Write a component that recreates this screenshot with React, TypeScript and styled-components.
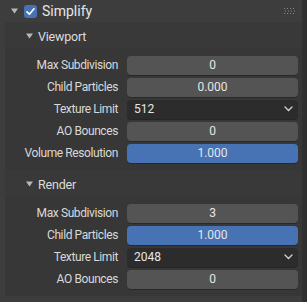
import styled, { createGlobalStyle } from 'styled-components';

const GlobalStyle = createGlobalStyle`
  html, body {
    margin: 0;
    padding: 0;
    background: #2b2b2b;
  }
  body {
    font-family: Roboto, 'Noto Sans', sans-serif;
  }
`;

// --- Panel layout ---

const Page = styled.div`
  width: 307px;
  height: 302px;
  overflow: hidden;
  background: #303030;
  display: flex;
  flex-direction: column;
`;

const Panel = styled.div`
  width: 302px;
  background: #3d3d3d;
  display: flex;
  flex-direction: column;
`;

const PanelHeader = styled.div`
  height: 22px;
  display: flex;
  align-items: center;
  padding-left: 11px;
  padding-right: 6px;
  color: #e6e6e6;
  font-size: 14px;
`;

const PanelBody = styled.div`
  padding-left: 5px;
  display: flex;
  flex-direction: column;
  background: #3d3d3d;
`;

const SubPanel = styled.div`
  background: #373737;
  display: flex;
  flex-direction: column;
`;

const SubHeader = styled.div`
  height: 26px;
  padding-top: 2px;
  box-sizing: border-box;
  display: flex;
  align-items: center;
  padding-left: 21px;
  color: #dcdcdc;
  font-size: 12.5px;
  letter-spacing: -0.2px;
  background: #393939;
`;

const SubBody = styled.div`
  padding: 7px 4px 7px 0;
  display: flex;
  flex-direction: column;
  gap: 2px;
`;

const Row = styled.div`
  height: 20px;
  display: flex;
  align-items: center;
`;

const Label = styled.div`
  width: 113px;
  padding-right: 9px;
  text-align: right;
  color: #d9d9d9;
  font-size: 12px;
  letter-spacing: -0.4px;
  white-space: nowrap;
`;

const Field = styled.div<{ active?: boolean }>`
  flex: 1;
  height: 19px;
  border-radius: 4px;
  background: ${({ active }) => (active ? '#4772b3' : '#545454')};
  color: #e6e6e6;
  font-size: 12px;
  display: flex;
  align-items: center;
  justify-content: center;
  box-shadow: 0 1px 0 rgba(0, 0, 0, 0.25);
`;

const Dropdown = styled.div`
  flex: 1;
  height: 19px;
  border-radius: 4px;
  background: #2c2c2c;
  color: #e6e6e6;
  font-size: 12px;
  display: flex;
  align-items: center;
  justify-content: space-between;
  padding: 0 5px 0 7px;
  box-shadow: 0 1px 0 rgba(0, 0, 0, 0.3);
`;

const Title = styled.span`
  margin-left: 5px;
`;

const Spacer = styled.div`
  flex: 1;
`;

const CheckBox = styled.div`
  width: 13px;
  height: 13px;
  border-radius: 3px;
  background: #4772b3;
  margin-left: 6px;
  display: flex;
  align-items: center;
  justify-content: center;
`;

const Footer = styled.div`
  flex: 1;
  background: #3d3d3d;
  width: 302px;
`;

// --- Icons ---

const Triangle = () => (
  <svg width="7" height="6" viewBox="0 0 7 6">
    <path d="M0 0.5 L7 0.5 L3.5 5.5 Z" fill="#b8b8b8" />
  </svg>
);

const Check = () => (
  <svg width="11" height="11" viewBox="0 0 11 11">
    <path d="M2 5.8 L4.4 8.2 L9 2.8" stroke="#ffffff" strokeWidth="1.7" fill="none" strokeLinecap="round" strokeLinejoin="round" />
  </svg>
);

const Chevron = () => (
  <svg width="9" height="6" viewBox="0 0 9 6">
    <path d="M1 1 L4.5 4.5 L8 1" stroke="#d0d0d0" strokeWidth="1.3" fill="none" strokeLinecap="round" />
  </svg>
);

const Grip = () => (
  <svg width="12" height="7" viewBox="0 0 12 7">
    {[0, 1, 2, 3].map(c =>
      [0, 1, 2].map(r => (
        <rect key={`${c}-${r}`} x={c * 3 + (r % 2)} y={r * 2.5} width="1" height="1" fill="#8a8a8a" />
      )),
    )}
  </svg>
);

type Item =
  | { label: string; value: string; kind: 'num'; active?: boolean }
  | { label: string; value: string; kind: 'menu' };

const viewport: Item[] = [
  { label: 'Max Subdivision', value: '0', kind: 'num' },
  { label: 'Child Particles', value: '0.000', kind: 'num' },
  { label: 'Texture Limit', value: '512', kind: 'menu' },
  { label: 'AO Bounces', value: '0', kind: 'num' },
  { label: 'Volume Resolution', value: '1.000', kind: 'num', active: true },
];

const render: Item[] = [
  { label: 'Max Subdivision', value: '3', kind: 'num' },
  { label: 'Child Particles', value: '1.000', kind: 'num', active: true },
  { label: 'Texture Limit', value: '2048', kind: 'menu' },
  { label: 'AO Bounces', value: '0', kind: 'num' },
];

const Section = ({ title, items }: { title: string; items: Item[] }) => (
  <SubPanel>
    <SubHeader>
      <Triangle />
      <Title>{title}</Title>
    </SubHeader>
    <SubBody>
      {items.map(item => (
        <Row key={item.label}>
          <Label>{item.label}</Label>
          {item.kind === 'menu' ? (
            <Dropdown>
              <span>{item.value}</span>
              <Chevron />
            </Dropdown>
          ) : (
            <Field active={item.active}>{item.value}</Field>
          )}
        </Row>
      ))}
    </SubBody>
  </SubPanel>
);

export default function App() {
  return (
    <>
      <GlobalStyle />
      <Page>
        <Panel>
          <PanelHeader>
            <Triangle />
            <CheckBox>
              <Check />
            </CheckBox>
            <Title>Simplify</Title>
            <Spacer />
            <Grip />
          </PanelHeader>
          <PanelBody>
            <Section title="Viewport" items={viewport} />
            <Section title="Render" items={render} />
          </PanelBody>
        </Panel>
        <Footer />
      </Page>
    </>
  );
}
